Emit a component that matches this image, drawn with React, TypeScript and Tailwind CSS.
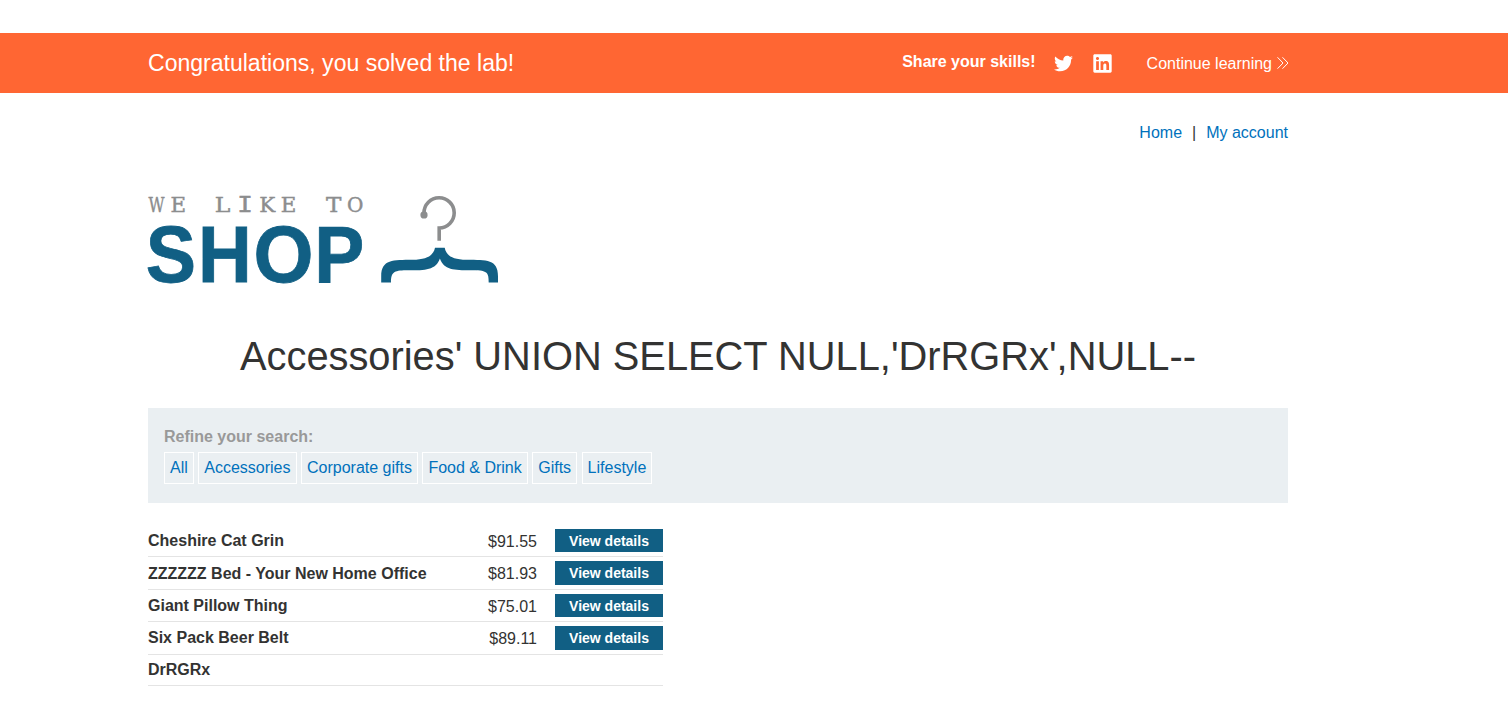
import { FaTwitter, FaLinkedin } from 'react-icons/fa';

const filters = ['All', 'Accessories', 'Corporate gifts', 'Food & Drink', 'Gifts', 'Lifestyle'];

const products = [
  { name: 'Cheshire Cat Grin', price: '$91.55', offset: 'pt-[3px]' },
  { name: 'ZZZZZZ Bed - Your New Home Office', price: '$81.93', offset: 'pt-[3.5px]' },
  { name: 'Giant Pillow Thing', price: '$75.01', offset: 'pt-[3px]' },
  { name: 'Six Pack Beer Belt', price: '$89.11', offset: 'pt-[3px]' },
  { name: 'DrRGRx', price: '', offset: 'pt-[2.3px]' },
];

const tagline = [
  { c: 'W', x: 0.6, w: 16, font: 'DejaVu Serif' },
  { c: 'E', x: 22.6, w: 15.6, font: 'DejaVu Serif' },
  { c: 'L', x: 66.8, w: 15.6, font: 'DejaVu Serif' },
  { c: 'I', x: 89.2, w: 15.6, font: 'DejaVu Sans Mono' },
  { c: 'K', x: 111.2, w: 16, font: 'DejaVu Serif' },
  { c: 'E', x: 132.8, w: 15.6, font: 'DejaVu Serif' },
  { c: 'T', x: 178, w: 15.4, font: 'DejaVu Serif' },
  { c: 'O', x: 199, w: 16.4, font: 'DejaVu Serif' },
];

const wordmark = [
  { c: 'S', x: -2.3, w: 50.3 },
  { c: 'H', x: 50, w: 53.8 },
  { c: 'O', x: 105.4, w: 60 },
  { c: 'P', x: 166.3, w: 50 },
];

function Logo() {
  return (
    <svg width="352" height="90" viewBox="0 0 352 90" className="block overflow-visible">
      <g fill="#8c8d8e" stroke="#8c8d8e" strokeWidth="0.45" fontSize="21">
        {tagline.map((l, i) => (
          <text key={i} x={l.x} y="15.8" fontFamily={l.font} textLength={l.w} lengthAdjust="spacingAndGlyphs">{l.c}</text>
        ))}
      </g>
      <g fill="#115f84" stroke="#115f84" strokeWidth="0.8" fontFamily="Liberation Sans, sans-serif" fontWeight="700" fontSize="80">
        {wordmark.map((l) => (
          <text key={l.c} x={l.x} y="86.2" textLength={l.w} lengthAdjust="spacingAndGlyphs">{l.c}</text>
        ))}
      </g>
      <circle cx="276" cy="18.9" r="3.6" fill="#8c8d8e" />
      <path d="M276 19V17.200A15.100 15.100 0 1 1 291.200 32.200V45" fill="none" stroke="#8c8d8e" strokeWidth="3.6" transform="translate(0 -0.2)" />
      <path
        d="M287 52h9.700c1.500 7 6.200 12 22 12.100 20 .2 31.300-.5 31.300 16.400v6.300h-9.300c0-9.500-1-12.300-15-12.300-18 0-29.700.4-33.800-11.800-4.100 12.200-15.700 11.900-33.900 11.900-12.500 0-15 2.500-15 12.200H233.200v-6.300c0-16.900 12-16.200 31.300-16.400 15.800-.1 21-5.100 22.500-12.100z"
        fill="#115f84"
        transform="translate(0 -0.3)"
      />
    </svg>
  );
}

export default function App() {
  return (
    <div className="min-h-[711px] bg-white pt-[33px] font-['Liberation_Sans',Arial,sans-serif] text-base leading-[18px] text-[#333332]">
      <div className="h-[60px] bg-[#ff6633] text-white">
        <div className="ml-[148px] flex h-full w-[1140px] items-center">
          <h4 className="flex-1 text-[23.04px] leading-[30px]">Congratulations, you solved the lab!</h4>
          <span className="mr-[18.5px] mb-[3px] font-bold">Share your skills!</span>
          <FaTwitter className="mt-px mr-[19px] size-[19px]" />
          <FaLinkedin className="mt-px mr-[33.500px] h-[21px] w-[21px]" />
          <a className="flex items-center gap-[4.500px] pt-0.5">
            <span>Continue learning</span>
            <svg width="11.500" height="12" viewBox="0.500 0 11.500 12" fill="none" stroke="currentColor" strokeWidth="1" className="-mt-0.5">
              <path d="M1 .3 6.500 6 1 11.700M6 .3 11.500 6 6 11.700" />
            </svg>
          </a>
        </div>
      </div>

      <div className="ml-[148px] w-[1140px]">
        <nav className="flex justify-end gap-[10px] pt-[31px]">
          <a className="text-[#0071bc]">Home</a>
          <span>|</span>
          <a className="text-[#0071bc]">My account</a>
        </nav>
        <header className="mt-[54px]">
          <Logo />
        </header>
        <h1 className="mt-[46px] text-center text-[39.84px] leading-[48px]">Accessories' UNION SELECT NULL,'DrRGRx',NULL--</h1>

        <section className="mt-[28px] h-[95px] bg-[#eaeff2] px-4 pt-5">
          <label className="block font-bold text-[#999999]">Refine your search:</label>
          <div className="mt-[6px] flex gap-[4.47px]">
            {filters.map((f) => (
              <a key={f} className="h-8 border border-white px-[5px] pt-[6px] text-[#0071bc]">{f}</a>
            ))}
          </div>
        </section>

        <div className="mt-[21.5px] w-[515px]">
          {products.map((p) => (
            <div
              key={p.name}
              className={`flex border-b border-[#e4e4e4] pt-[4.3px] ${p.price ? 'h-[32.5px]' : 'h-[31.5px]'}`}
            >
              <span className={`flex-1 font-bold ${p.offset}`}>{p.name}</span>
              {p.price && (
                <>
                  <span className="mr-[18px] pt-[4px]">{p.price}</span>
                  <a className="h-[23.5px] w-[108px] bg-[#115f84] pt-[3px] text-center text-sm leading-[18px] font-bold text-white">
                    View details
                  </a>
                </>
              )}
            </div>
          ))}
        </div>
      </div>
    </div>
  );
}
